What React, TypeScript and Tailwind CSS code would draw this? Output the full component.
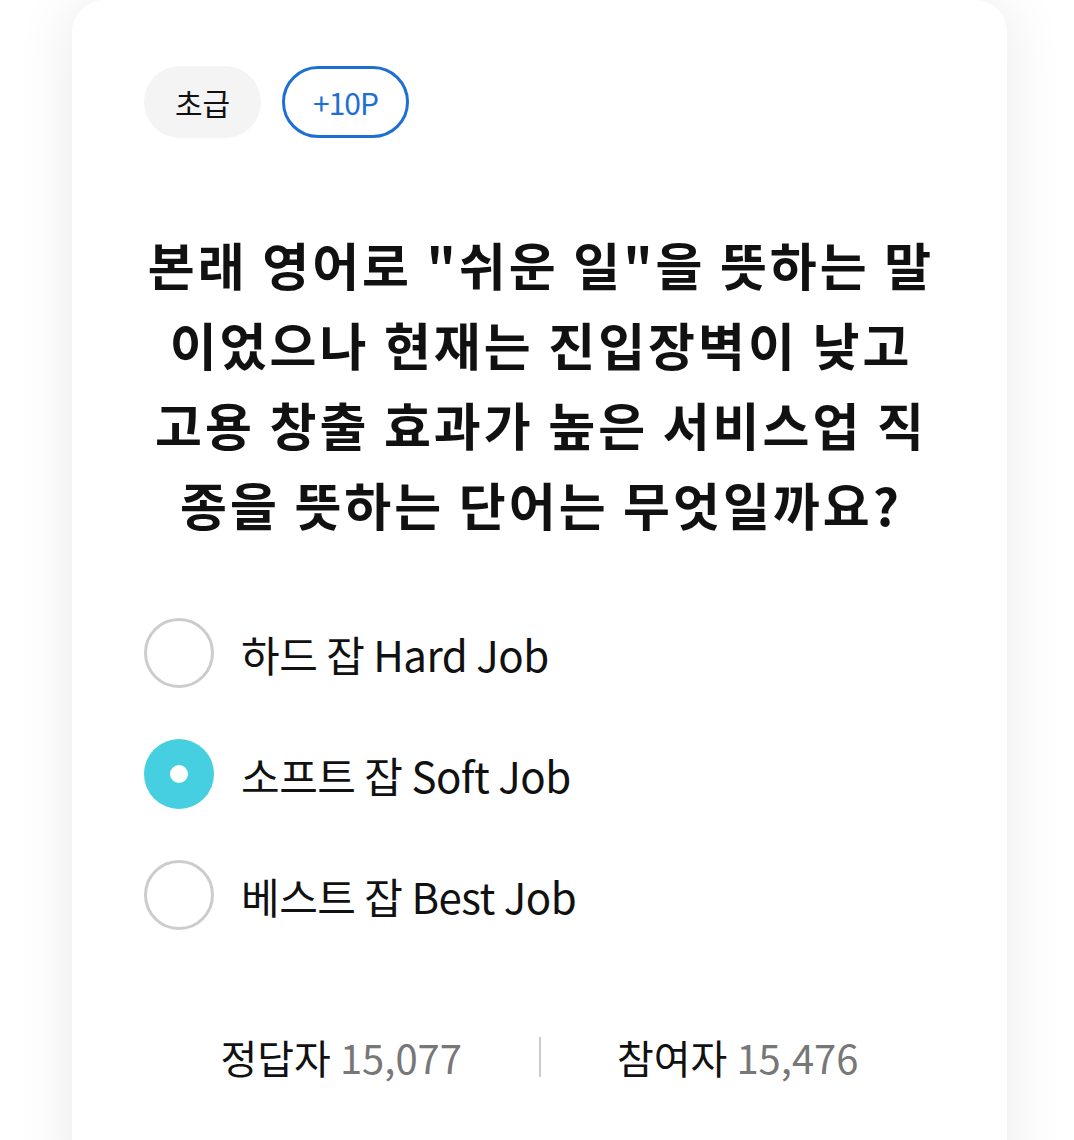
import React from "react";

const font = { fontFamily: '"Noto Sans CJK KR", "Noto Sans", sans-serif' };

function Radio({ checked }: { checked?: boolean }) {
  if (checked) {
    return (
      <div className="w-[70px] h-[70px] rounded-full bg-[#45cfe0] flex items-center justify-center shrink-0">
        <div className="w-[18px] h-[18px] rounded-full bg-white" />
      </div>
    );
  }
  return <div className="w-[70px] h-[70px] rounded-full border-[3px] border-[#cccccc] bg-white shrink-0" />;
}

export default function App() {
  const options = [
    { label: "하드 잡 Hard Job", checked: false },
    { label: "소프트 잡 Soft Job", checked: true },
    { label: "베스트 잡 Best Job", checked: false },
  ];
  return (
    <div className="w-[1074px] h-[1140px] overflow-hidden bg-white" style={font}>
      <div className="ml-[72px] w-[935px] h-[1200px] bg-white rounded-t-[32px] shadow-[0_0_60px_rgba(0,0,0,0.09)] px-[72px] pt-[66px]">
        <div className="flex gap-[21px]">
          <div className="h-[72px] w-[117px] rounded-full bg-[#f4f4f4] flex items-center justify-center text-[30px] text-[#111]">
            초급
          </div>
          <div className="h-[72px] w-[127px] rounded-full border-[3px] border-[#1e6fd4] flex items-center justify-center text-[30px] text-[#1e6fd4] tracking-[-1px]">
            +10P
          </div>
        </div>
        <div className="mt-[86px] -mx-[20px] text-center font-bold text-[51px] leading-[80px] text-[#111] tracking-[3px] pl-[3px]">
          본래 영어로 "쉬운 일"을 뜻하는 말<br />
          이었으나 현재는 진입장벽이 낮고<br />
          고용 창출 효과가 높은 서비스업 직<br />
          종을 뜻하는 단어는 무엇일까요?
        </div>
        <div className="mt-[74px] flex flex-col gap-[51px]">
          {options.map((o) => (
            <div key={o.label} className="flex items-center gap-[27px]">
              <Radio checked={o.checked} />
              <span className="text-[42px] text-[#111] tracking-[-0.5px]">{o.label}</span>
            </div>
          ))}
        </div>
        <div className="mt-[106px] flex items-center h-[42px]">
          <div className="flex-1 text-center text-[40px] text-[#111]">
            정답자 <span className="text-[#777]">15,077</span>
          </div>
          <div className="w-[2px] h-[40px] bg-[#cccccc]" />
          <div className="flex-1 text-center text-[40px] text-[#111]">
            참여자 <span className="text-[#777]">15,476</span>
          </div>
        </div>
      </div>
    </div>
  );
}
